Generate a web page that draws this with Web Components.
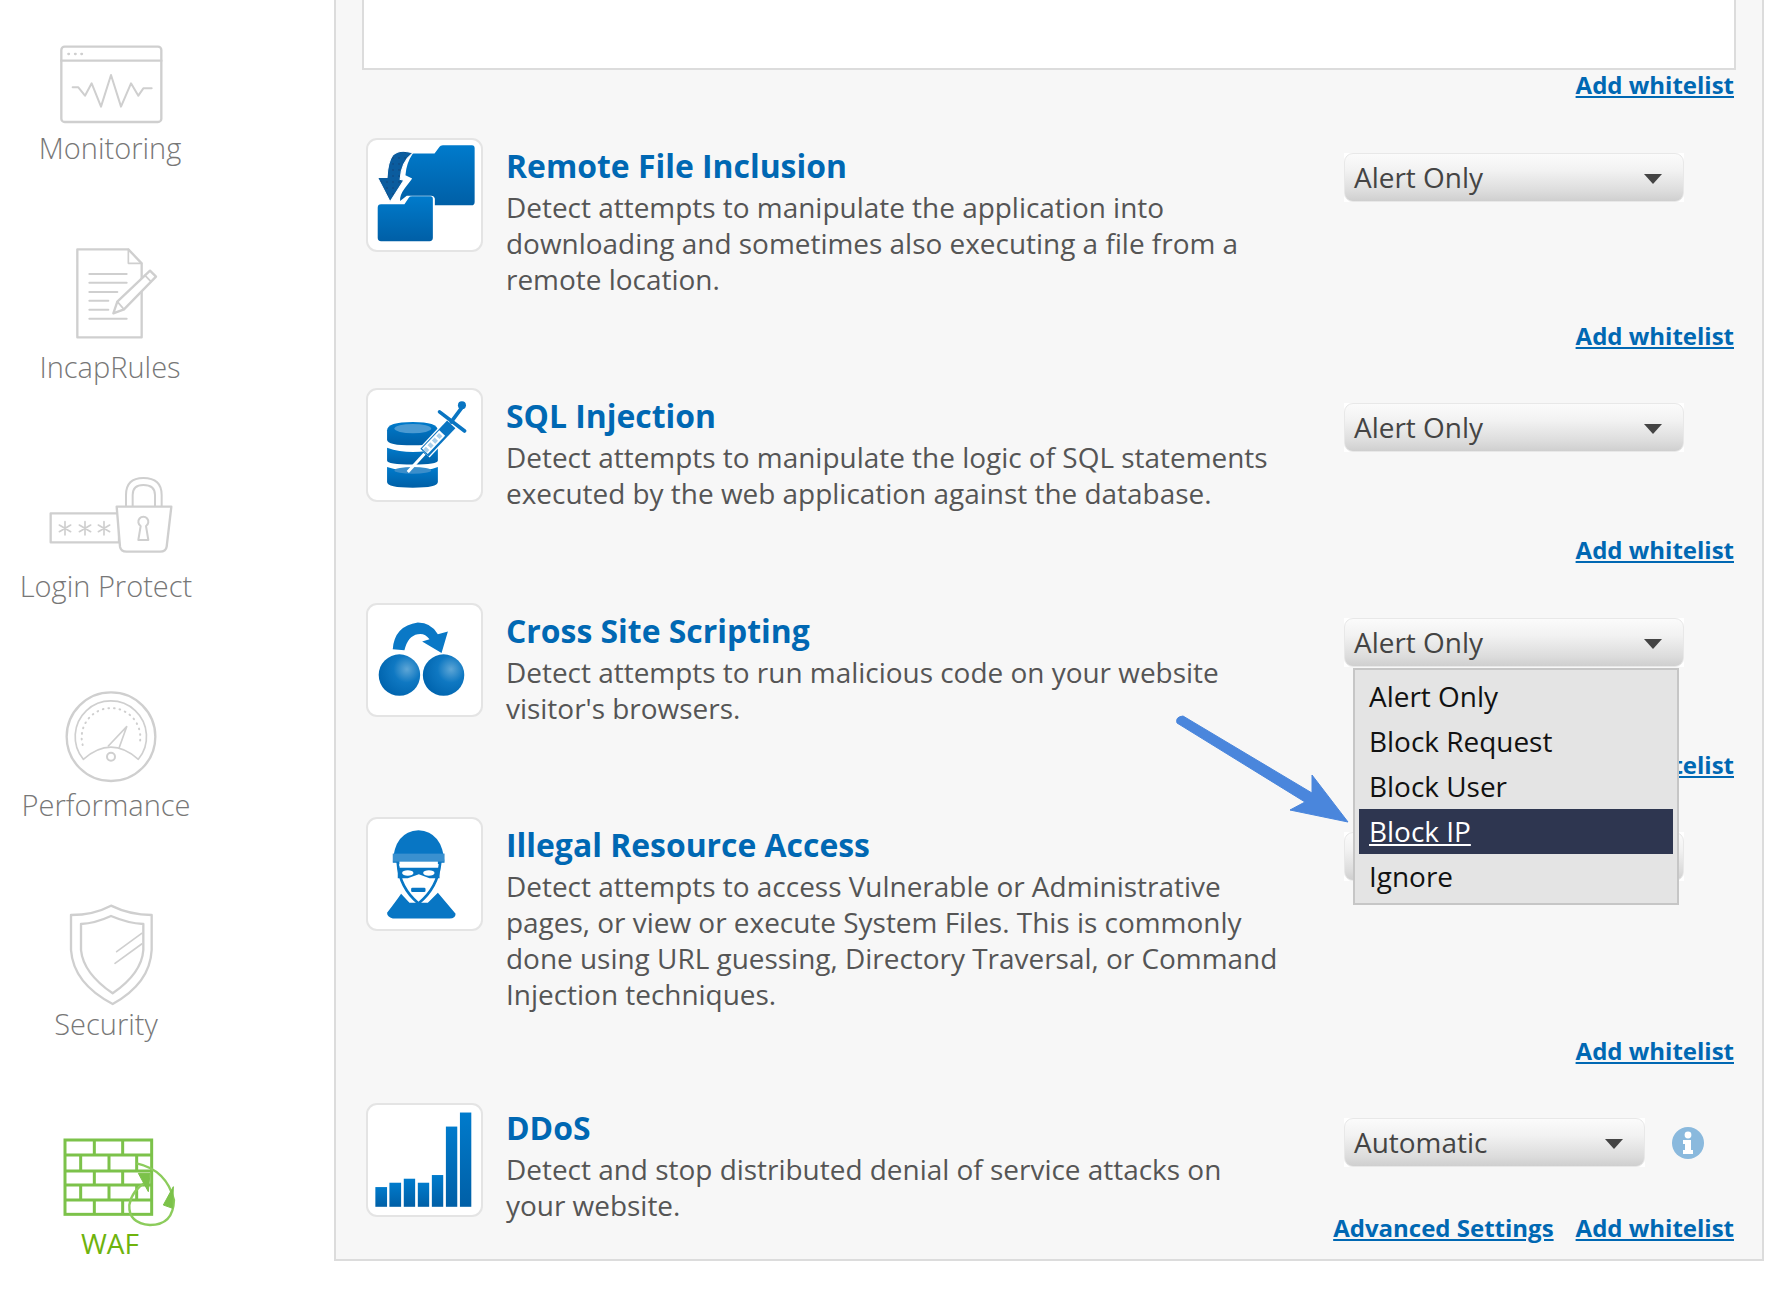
<!DOCTYPE html>
<html><head><meta charset="utf-8"><title>WAF settings</title>
<style>
html,body{margin:0;padding:0;background:#fff}
body{font-family:"Open Sans","Liberation Sans",sans-serif;width:1785px;height:1312px;overflow:hidden}
</style></head>
<body>
<waf-app>
  <waf-nav slot="nav">
    <waf-nav-item icon="monitoring" cx="110">Monitoring</waf-nav-item>
    <waf-nav-item icon="rules" cx="110">IncapRules</waf-nav-item>
    <waf-nav-item icon="login" cx="106">Login Protect</waf-nav-item>
    <waf-nav-item icon="perf" cx="106">Performance</waf-nav-item>
    <waf-nav-item icon="security" cx="106">Security</waf-nav-item>
    <waf-nav-item icon="waf" cx="110" active>WAF</waf-nav-item>
  </waf-nav>
  <waf-panel slot="main">
    <waf-textbox></waf-textbox>
    <waf-links><waf-link>Add whitelist</waf-link></waf-links>
    <waf-rule heading="Remote File Inclusion" icon="rfi" value="Alert Only">Detect attempts to manipulate the application into downloading and sometimes also executing a file from a remote location.<waf-links slot="links"><waf-link>Add whitelist</waf-link></waf-links></waf-rule>
    <waf-rule heading="SQL Injection" icon="sql" value="Alert Only">Detect attempts to manipulate the logic of SQL statements executed by the web application against the database.<waf-links slot="links"><waf-link>Add whitelist</waf-link></waf-links></waf-rule>
    <waf-rule heading="Cross Site Scripting" icon="xss" value="Alert Only" open>Detect attempts to run malicious code on your website visitor's browsers.<waf-links slot="links"><waf-link>Add whitelist</waf-link></waf-links></waf-rule>
    <waf-rule heading="Illegal Resource Access" icon="thief" value="">Detect attempts to access Vulnerable or Administrative pages, or view or execute System Files. This is commonly done using URL guessing, Directory Traversal, or Command Injection techniques.<waf-links slot="links"><waf-link>Add whitelist</waf-link></waf-links></waf-rule>
    <waf-rule heading="DDoS" icon="ddos" value="Automatic" narrow last>Detect and stop distributed denial of service attacks on your website.<waf-links slot="links"><waf-link>Advanced Settings</waf-link><waf-link>Add whitelist</waf-link></waf-links></waf-rule>
  </waf-panel>
</waf-app>
<script>
const G='fill="none" stroke="#cfcfcf" stroke-width="7" stroke-linejoin="round" stroke-linecap="round"';
const defs=`<defs><linearGradient id="b" x1="0" y1="0" x2="0" y2="1"><stop offset="0" stop-color="#007bcc"/><stop offset="1" stop-color="#005fa6"/></linearGradient><radialGradient id="s" cx=".68" cy=".36" r=".72"><stop offset="0" stop-color="#5ea6d6"/><stop offset=".45" stop-color="#0f78c2"/><stop offset="1" stop-color="#0064ae"/></radialGradient><pattern id="d" width="18" height="18" patternUnits="userSpaceOnUse"><rect width="18" height="18" fill="#0b5c9e"/><circle cx="5" cy="5" r="2" fill="#123a6a"/></pattern></defs>`;
const NAV={
monitoring:['153 90 360 300',`<g ${G}><rect x="184" y="140" width="300" height="226" rx="10"/><path d="M184 182H484"/><path d="M218 262H235L255 287L275 250L303 320L333 225L363 320L393 250L415 287L430 265H455" stroke-width="6"/><path d="M205 162h2M225 162h2M244 162h2"/></g>`],
rules:['153 747 360 300',`<g ${G}><path d="M232 748H385L425 790V1012H232Z"/><path d="M385 748V790H425" stroke-width="5"/><path d="M268 822H380M268 848H380M268 876H352M268 902H325M268 929H325M268 956H380" stroke-width="6"/><path d="M340 940L352 905L450 812L468 830L372 928Z" fill="#fff"/><path d="M352 905L372 928M435 826L453 845" stroke-width="5"/></g>`],
login:['153 84 360 300',`<g ${G}><rect x="152" y="220" width="205" height="87"/><path d="M195 245V285M178 255L212 275M212 255L178 275M255 245V285M238 255L272 275M272 255L238 275M312 245V285M295 255L329 275M329 255L295 275" stroke-width="5"/><path d="M350 200H514L500 320Q498 335 480 335H380Q362 335 360 320Z" fill="#fff"/><path d="M378 198V165Q378 114 430 114Q485 114 485 165V198M398 198V165Q398 135 430 135Q465 135 465 165V198" stroke-width="6"/><path d="M422 258A15 15 0 1 1 438 258L445 300H415Z" stroke-width="6"/></g>`],
perf:['153 741 360 300',`<g ${G}><circle cx="333" cy="890" r="133"/><path d="M250 958A107 107 0 1 1 415 958Q333 885 250 958Z" stroke-width="5"/><path d="M248 915A88 88 0 1 1 418 915" stroke-width="6" stroke-dasharray="2 15"/><path d="M325 918L380 860L358 922" stroke-width="5"/><circle cx="333" cy="950" r="12" stroke-width="6"/></g>`],
security:['153 78 360 300',`<g ${G}><path d="M333 77Q390 105 455 105V210Q450 310 338 372Q220 310 213 210V105Q280 105 333 77Z"/><path d="M333 108Q385 130 430 132V210Q425 280 338 340Q250 280 243 210V132Q285 130 333 108Z"/><path d="M350 215L425 160M345 250L425 192" stroke-width="5"/></g>`],
waf:['153 735 360 300',`<g fill="none" stroke="#7cc24a" stroke-width="9"><rect x="195" y="780" width="260" height="223"/><path d="M195 825H455M195 873H455M195 915H455M195 960H455"/><path d="M283 780V825M368 780V825M242 825V873M327 825V873M410 825V873M283 873V915M368 873V915M242 915V960M327 915V960M410 915V960M283 960V1003M368 960V1003"/><path d="M410 850Q500 870 522 960Q520 1035 450 1035Q385 1030 388 975Q395 930 440 905" stroke-width="7" stroke="#8ccc5c"/><path d="M415 880L445 935L450 880ZM490 975L520 920L518 985Z" fill="#7cc24a" stroke-width="3"/></g>`]
};
const RULE={
rfi:['50 55 350 338',`<path fill="url(#b)" d="M190 100H255L270 80Q272 75 280 75H367Q375 75 375 84V245Q375 255 365 255H256V235Q254 226 245 226H172L152 242Q150 225 165 205Q185 180 188 175L168 165Q170 130 190 100Z"/><path fill="url(#b)" d="M85 262Q85 252 95 252H165L178 232Q180 228 188 228H243Q250 228 250 236V352Q250 362 240 362H95Q85 362 85 352Z"/><path fill="url(#d)" stroke="#fff" stroke-width="3" d="M190 98Q150 85 130 105Q115 125 113 172H85L122 244L163 180L152 177Q155 125 190 98Z"/>`],
sql:['50 805 350 338',`<g fill="url(#b)"><path d="M113 930Q113 905 190 905Q265 905 265 930V958Q265 975 190 975Q113 975 113 958Z"/><path d="M113 982Q150 995 190 995Q235 995 265 982V1020Q265 1032 190 1032Q113 1032 113 1020Z"/><path d="M113 1040Q150 1052 190 1052Q235 1052 265 1040V1085Q265 1102 190 1102Q113 1102 113 1085Z"/></g><ellipse cx="190" cy="925" rx="55" ry="14" fill="#4b9ad2"/><ellipse cx="190" cy="1050" rx="55" ry="10" fill="#3a8ecb"/><path d="M175 1055L225 1000" stroke="#fff" stroke-width="9" fill="none"/><path d="M225 997L305 912" stroke="#fff" stroke-width="42" fill="none"/><path d="M225 997L305 912" stroke="#0a75c2" stroke-width="34" fill="none"/><path d="M226 993L278 938" stroke="#fff" stroke-width="24" fill="none"/><path d="M226 993L278 938" stroke="#a9cfea" stroke-width="14" fill="none" stroke-dasharray="12 7"/><g stroke="#0a75c2" stroke-width="11" fill="none" stroke-linecap="round"><path d="M270 875L345 932"/><path d="M305 905L340 858"/></g><circle cx="337" cy="855" r="12" fill="#0a75c2"/>`],
xss:['50 38 350 338',`<circle cx="150" cy="252" r="62" fill="url(#s)"/><circle cx="282" cy="252" r="62" fill="url(#s)"/><path fill="#0a78c6" d="M130 175Q135 105 205 95Q245 95 265 130L295 122L276 186L218 152L240 145Q225 125 205 130Q175 135 165 178Z"/>`],
thief:['50 680 350 338',`<path fill="#0876c4" d="M113 965Q140 930 155 908L180 935H235L265 905L318 968Q318 982 300 982H130Q113 978 113 965Z"/><path fill="#fff" stroke="#0876c4" stroke-width="8" d="M145 815Q150 890 207 937Q265 890 272 815Z"/><path fill="#0876c4" d="M130 815Q135 722 207 718Q278 722 285 815Z"/><rect x="130" y="788" width="155" height="24" fill="#3a90cf"/><rect x="150" y="812" width="115" height="13" fill="#fff"/><path fill="#0876c4" d="M145 830H270V862H240L208 850L175 862H145Z"/><ellipse cx="175" cy="846" rx="17" ry="8" fill="#fff"/><ellipse cx="238" cy="846" rx="17" ry="8" fill="#fff"/><rect x="185" y="890" width="43" height="13" rx="4" fill="#0876c4"/>`],
ddos:['50 38 350 338',`<g fill="url(#b)"><rect x="78" y="288" width="35" height="59"/><rect x="120" y="275" width="35" height="72"/><rect x="163" y="263" width="34" height="84"/><rect x="205" y="275" width="34" height="72"/><rect x="247" y="252" width="34" height="95"/></g><rect x="289" y="107" width="34" height="240" fill="url(#b)"/><rect x="331" y="65" width="34" height="282" fill="url(#b)"/>`]
};
function def(name,css,html){
  customElements.define(name,class extends HTMLElement{
    connectedCallback(){
      if(this.shadowRoot)return;
      const r=this.attachShadow({mode:'open'});
      r.innerHTML=`<style>${css}</style>`+(typeof html==='function'?html(this):html);
    }
  });
}
def('waf-app',`:host{display:flex;position:relative;width:1785px;height:1312px}
 .arrow{position:absolute;left:1170px;top:705px;overflow:visible;z-index:5}`,
 `<slot name="nav"></slot><slot name="main"></slot>
 <svg class="arrow" width="185" height="125" viewBox="1170 705 185 125"><path fill="#4a86dc" stroke="#4a86dc" stroke-width="1" stroke-linejoin="round" d="M1183 716L1312 793L1312 775L1348 822L1290 810L1305 802L1177 723Q1175 717 1183 716Z"/></svg>`);
def('waf-nav',`:host{display:flex;flex-direction:column;width:334px;flex:none;box-sizing:border-box;padding-top:30px}`,`<slot></slot>`);
def('waf-nav-item',`:host{display:block;flex:none;height:219px;color:#777;font:300 29px/36px "Open Sans",sans-serif}
 :host([active]){color:#6fb30d;font-weight:400;font-size:28px}
 svg{display:block;width:120px;height:100px;margin-left:51px;overflow:visible}
 .l{display:block;width:220px;text-align:center;white-space:nowrap}`,
 h=>{const [vb,c]=NAV[h.getAttribute('icon')];const cx=+h.getAttribute('cx');
  return `<svg viewBox="${vb}">${c}</svg><span class="l" style="margin-left:${cx-110}px"><slot></slot></span>`});
def('waf-panel',`:host{display:block;width:1430px;height:1261px;box-sizing:border-box;flex:none;background:#f7f7f7;border:solid #dcdcdc;border-width:0 2px 2px 2px;padding:0 26px}`,`<slot></slot>`);
def('waf-textbox',`:host{display:block;height:70px;box-sizing:border-box;background:#fff;border:solid #dcdcdc;border-width:0 2px 2px 2px}`,``);
def('waf-links',`:host{display:flex;justify-content:flex-end;gap:22px;padding-right:2px;height:36px;margin-top:-3px;margin-bottom:35px}
 :host([slot=links]){margin:0}`,`<slot></slot>`);
def('waf-link',`:host{display:block;font:700 24px/36px "Open Sans",sans-serif;color:#0068b3;text-decoration:underline;white-space:nowrap}`,`<slot></slot>`);
def('waf-rule',`:host{display:flex;flex-direction:column;padding:0 0 34.3px 4px}
 :host([last]){padding-bottom:0}
 .top{display:flex;align-items:flex-start}
 .box{width:117px;height:114px;flex:none;box-sizing:border-box;background:#fff;border:2px solid #e4e4e4;border-radius:11px;margin-right:23px;overflow:hidden}
 .box svg{display:block;width:117px;height:114px;margin:-2px}
 .txt{width:775px;flex:none;padding-top:10px;padding-bottom:21px;color:#555;font:400 27.95px/36px "Open Sans",sans-serif}
 h3{margin:0 0 5px;font:700 31.9px/36px "Open Sans",sans-serif;color:#0068b3}
 :host([last]) .txt{padding-top:7px;padding-bottom:0}
 :host([last]) .lk{margin-top:-13px}
 .sel{margin-left:auto;padding-top:15px;display:flex;align-items:center;flex:none;width:339px;margin-right:53px}`,
 h=>{const [vb,c]=RULE[h.getAttribute('icon')];
  const info=h.hasAttribute('narrow')?`<waf-info></waf-info>`:'';
  return `<div class="top"><div class="box"><svg viewBox="${vb}">${defs}${c}</svg></div>
  <div class="txt"><h3>${h.getAttribute('heading')}</h3><slot></slot></div>
  <div class="sel"><waf-select value="${h.getAttribute('value')}" ${h.hasAttribute('narrow')?'narrow':''} ${h.hasAttribute('open')?'open':''}></waf-select>${info}</div></div>
  <div class="lk"><slot name="links"></slot></div>`});
def('waf-select',`:host{display:block;position:relative;width:340px;height:49px;background:#fff;flex:none}
 :host([narrow]){width:301px}
 .b{box-sizing:border-box;height:49px;border:1px solid #e8e8e8;border-radius:9px;background:linear-gradient(#fbfbfb 0,#f2f2f2 35%,#dcdcdc 80%,#cfcfcf 100%);color:#444;font:400 27.95px/46px "Open Sans",sans-serif;padding-left:9px;position:relative}
 .t{position:absolute;right:21px;top:20px;width:0;height:0;border:9px solid transparent;border-top:10px solid #444;border-bottom:0}
 waf-menu{position:absolute;left:9px;top:50px}`,
 h=>`<div class="b">${h.getAttribute('value')}<span class="t"></span></div>${h.hasAttribute('open')?'<waf-menu></waf-menu>':''}`);
def('waf-menu',`:host{display:block;z-index:4;width:326px;box-sizing:border-box;background:#e4e4e4;border:2px solid #c6c6c6;padding:4px;color:#111;font:400 27.95px/45px "Open Sans",sans-serif}
 div{height:45px;padding-left:10px}
 .on{background:#2e3650;color:#fff;text-decoration:underline}`,
 `<div>Alert Only</div><div>Block Request</div><div>Block User</div><div class="on">Block IP</div><div>Ignore</div>`);
def('waf-info',`:host{display:block;width:32px;height:32px;margin-left:27px;flex:none}svg{display:block}`,
 `<svg width="32" height="32" viewBox="0 0 32 32"><circle cx="16" cy="16" r="16" fill="#8ab9dd"/><circle cx="16" cy="8" r="3.4" fill="#fff"/><path d="M11 13H19V23H21V27H11V23H13V17H11Z" fill="#fff"/></svg>`);
</script>
</body></html>
